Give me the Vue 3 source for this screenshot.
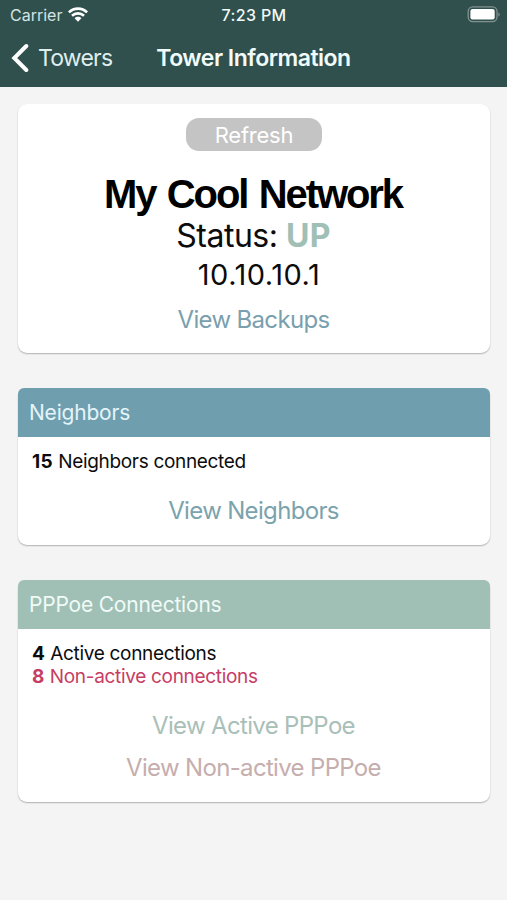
<script setup>
const title = 'Tower Information'
const neighbors = 15
const active = 4
const inactive = 8
</script>

<template>
  <div class="screen">
    <header class="top">
      <div class="status">
        <div class="carrier">
          <span class="carrier-name">Carrier</span>
          <svg class="wifi" width="20" height="15" viewBox="0 0 20 15">
            <path d="M.9 5.4C6 .3 14 .3 19.1 5.4" />
            <path d="M4 8.8C7.4 5.5 12.6 5.5 16 8.8" />
            <path class="solid" d="M6.6 11.2C8.5 9.4 11.5 9.4 13.4 11.2L10 14.7Z" />
          </svg>
        </div>
        <div class="time">7:23 PM</div>
        <div class="power">
          <svg width="34" height="17" viewBox="0 0 34 17">
            <rect class="shell" x="1.2" y=".8" width="28.8" height="14.8" rx="4.5" />
            <rect class="level" x="3.4" y="2.9" width="24.3" height="10.6" rx="2.2" />
            <path class="tip" d="M31.4 6.2C33.2 7 33.2 10 31.4 10.6Z" />
          </svg>
        </div>
      </div>
      <nav class="nav">
        <div class="back">
          <svg width="18" height="30" viewBox="0 0 18 30"><path d="M15.3 3L3.3 15L15.3 27" /></svg>
          <span class="back-label">Towers</span>
        </div>
        <h1 class="nav-title">{{ title }}</h1>
        <div></div>
      </nav>
    </header>

    <main class="cards">
      <section class="card summary">
        <button class="refresh">Refresh</button>
        <h2 class="network">My Cool Network</h2>
        <div class="state">Status: <b>UP</b></div>
        <div class="address">10.10.10.1</div>
        <a class="link backups">View Backups</a>
      </section>

      <section class="card neighbors">
        <h3 class="card-head blue"><span>Neighbors</span></h3>
        <div class="facts"><p class="f-neighbors"><b>{{ neighbors }}</b> Neighbors connected</p></div>
        <a class="link l-neighbors">View Neighbors</a>
      </section>

      <section class="card pppoe">
        <h3 class="card-head green"><span>PPPoe Connections</span></h3>
        <div class="facts">
          <p class="f-active"><b>{{ active }}</b> Active connections</p>
          <p class="f-inactive"><b>{{ inactive }}</b> Non-active connections</p>
        </div>
        <a class="link l-active">View Active PPPoe</a>
        <a class="link l-inactive">View Non-active PPPoe</a>
      </section>
    </main>
  </div>
</template>

<style>
body {
  background: #f4f4f4;
}
</style>

<style scoped>
.screen {
  min-height: 900px;
  background: #f4f4f4;
  color: #0c0c0c;
  font-family: Inter, "Liberation Sans", sans-serif;
}
h1, h2, h3, p {
  margin: 0;
}
.top {
  height: 87px;
  background: #30504e;
  color: #f1fbfa;
}
.status {
  display: grid;
  grid-template-columns: 1fr auto 1fr;
  align-items: center;
  height: 29px;
  padding: 0 6px 0 10px;
  font-size: 16px;
}
.carrier {
  display: flex;
  align-items: center;
  gap: 6px;
  color: #d5e3e1;
}
.wifi path {
  fill: none;
  stroke: #fff;
  stroke-width: 2.6;
}
.wifi .solid {
  fill: #fff;
  stroke: none;
}
.time {
  padding-right: 3px;
  font-weight: 500;
  letter-spacing: 0.35px;
}
.power {
  display: flex;
  justify-content: flex-end;
}
.shell {
  fill: none;
  stroke: #82918f;
  stroke-width: 1.3;
}
.level {
  fill: #fff;
}
.tip {
  fill: #82918f;
}
.nav {
  display: grid;
  grid-template-columns: 1fr auto 1fr;
  align-items: center;
  height: 58px;
  padding: 0 10px;
}
.back {
  display: flex;
  align-items: center;
  gap: 9px;
  padding-left: 1px;
  font-size: 23px;
  letter-spacing: -0.8px;
  color: #dfeeed;
}
.back path {
  fill: none;
  stroke: #fff;
  stroke-width: 4;
  stroke-linecap: round;
  stroke-linejoin: miter;
}
.nav-title {
  font-size: 23px;
  font-weight: 600;
  letter-spacing: -0.5px;
}
.cards {
  display: flex;
  flex-direction: column;
  gap: 35px;
  padding: 17px 17px 0 18px;
}
.card {
  display: flex;
  flex-direction: column;
  border-radius: 9px;
  background: #fff;
  box-shadow: 0 1px 1.5px rgba(0, 0, 0, 0.28);
}
.summary {
  align-items: center;
  height: 249px;
}
.refresh {
  width: 136px;
  height: 33px;
  margin: 14px 0 0;
  padding: 0;
  border: 0;
  border-radius: 13px;
  background: #c4c4c4;
  color: #fff;
  font: 400 22px/34px Inter, sans-serif;
  letter-spacing: -0.25px;
}
.network {
  margin-top: 19px;
  padding-right: 2px;
  color: #000;
  font: 700 40px/48px "Liberation Sans", sans-serif;
  letter-spacing: -2.08px;
  word-spacing: 2.4px;
}
.state {
  padding-right: 1px;
  font-size: 32px;
  line-height: 36px;
  letter-spacing: -0.5px;
}
.state b {
  color: #a0c0b6;
  letter-spacing: 0.3px;
}
.address {
  padding-left: 10px;
  font-size: 29px;
  line-height: 41px;
  letter-spacing: 0.5px;
}
.link {
  padding-right: 1px;
  font-size: 24px;
  line-height: 42px;
  letter-spacing: -0.67px;
  text-align: center;
  white-space: nowrap;
}
.backups {
  margin-top: 4px;
  color: #7a9fae;
}
.card-head {
  display: flex;
  align-items: center;
  height: 49px;
  padding-left: 11px;
  border-radius: 6px 6px 0 0;
  font-size: 21px;
  font-weight: 400;
  letter-spacing: -0.2px;
}
.blue {
  background: #6f9faf;
  color: #e5f4f9;
}
.green {
  background: #a0c0b6;
  color: #f0faf7;
}
.facts {
  padding: 13px 14px 0;
  font-size: 19px;
  line-height: 23px;
  letter-spacing: -0.32px;
}
.facts b {
  letter-spacing: 0.4px;
}
.neighbors {
  height: 157px;
}
.pppoe {
  height: 222px;
}
.l-neighbors {
  margin-top: 17px;
  color: #7ba3ad;
}
.f-inactive {
  color: #c73d63;
}
.l-active {
  margin-top: 17px;
  color: #a9c0b9;
}
.l-inactive {
  color: #c6aeae;
}
</style>
